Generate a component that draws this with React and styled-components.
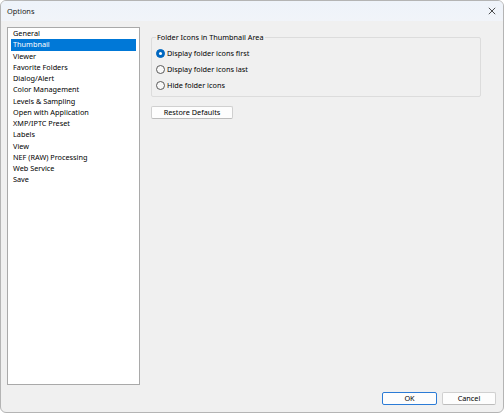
import React from "react";
import styled, { createGlobalStyle } from "styled-components";

const Global = createGlobalStyle`
  html, body { margin: 0; padding: 0; background: #ffffff; }
  body { font-family: "Noto Sans", "Open Sans", sans-serif; }
`;

const Window = styled.div`
  box-sizing: border-box;
  width: 504px;
  height: 413px;
  border: 1px solid #b4b4b4;
  border-radius: 6px;
  overflow: hidden;
  background: #f0f0f0;
  display: flex;
  flex-direction: column;
`;

const TitleBar = styled.div`
  height: 20px;
  flex: none;
  display: flex;
  align-items: center;
  justify-content: space-between;
  padding: 0 6px 0 6px;
  background: linear-gradient(#eef3fa, #f1f4f9);
  font-size: 7.4px;
  color: #1a1a1a;
`;

const CloseIcon = styled.svg`
  width: 8px;
  height: 8px;
  margin-right: 1px;
`;

const Body = styled.div`
  flex: 1;
  display: flex;
  flex-direction: column;
  padding: 6px 7px 7px 6px;
`;

const Main = styled.div`
  display: flex;
  gap: 11px;
`;

const ListBox = styled.div`
  box-sizing: border-box;
  width: 133px;
  height: 358px;
  background: #ffffff;
  border: 1px solid #a9a9a9;
  padding: 0 3px;
  display: flex;
  flex-direction: column;
`;

const ListItem = styled.div`
  height: 11.25px;
  line-height: 11.25px;
  font-size: 7.3px;
  padding-left: 2px;
  white-space: nowrap;
  color: ${(p) => (p.$selected ? "#ffffff" : "#000000")};
  background: ${(p) => (p.$selected ? "#0078d7" : "transparent")};
`;

const Panel = styled.div`
  flex: 1;
  display: flex;
  flex-direction: column;
  align-items: flex-start;
  padding-top: 6px;
  padding-right: 15px;
`;

const Group = styled.fieldset`
  box-sizing: border-box;
  align-self: stretch;
  margin: 0;
  border: 1px solid #dcdcdc;
  border-radius: 2px;
  padding: 3px 4px 6px 4px;
  display: flex;
  flex-direction: column;
  height: 64px;
  min-width: 0;
`;

const Legend = styled.legend`
  font-size: 7.3px;
  padding: 0 1px;
  margin-left: 0;
  color: #000;
  line-height: 9px;
`;

const RadioRow = styled.label`
  display: flex;
  align-items: center;
  height: 16px;
  gap: 2px;
  font-size: 7.3px;
  color: #000;
`;

const RadioCircle = styled.span`
  box-sizing: border-box;
  width: 9px;
  height: 9px;
  border-radius: 50%;
  display: flex;
  align-items: center;
  justify-content: center;
  background: ${(p) => (p.$checked ? "#0067c0" : "#f8f8f8")};
  border: 1px solid ${(p) => (p.$checked ? "#0067c0" : "#5a5a5a")};
  &::after {
    content: "";
    display: ${(p) => (p.$checked ? "block" : "none")};
    width: 3px;
    height: 3px;
    border-radius: 50%;
    background: #ffffff;
  }
`;

const Button = styled.button`
  box-sizing: border-box;
  height: 13px;
  width: ${(p) => p.$w}px;
  padding: 0;
  font-family: inherit;
  font-size: 7.3px;
  color: #000;
  background: #fdfdfd;
  border: 1px solid ${(p) => (p.$default ? "#2b7bd6" : "#d0d0d0")};
  border-bottom-color: ${(p) => (p.$default ? "#2b7bd6" : "#bcbcbc")};
  border-radius: 2px;
  line-height: 11px;
`;

const RestoreWrap = styled.div`
  margin-top: 1px;
`;

const Footer = styled.div`
  margin-top: auto;
  display: flex;
  justify-content: flex-end;
  gap: 5px;
`;

const items = [
  "General",
  "Thumbnail",
  "Viewer",
  "Favorite Folders",
  "Dialog/Alert",
  "Color Management",
  "Levels & Sampling",
  "Open with Application",
  "XMP/IPTC Preset",
  "Labels",
  "View",
  "NEF (RAW) Processing",
  "Web Service",
  "Save",
];

const radios = [
  { label: "Display folder icons first", checked: true },
  { label: "Display folder icons last", checked: false },
  { label: "Hide folder icons", checked: false },
];

export default function App() {
  return (
    <>
      <Global />
      <Window>
        <TitleBar>
          <span>Options</span>
          <CloseIcon viewBox="0 0 10 10">
            <path d="M1 1 L9 9 M9 1 L1 9" stroke="#222" strokeWidth="1" fill="none" />
          </CloseIcon>
        </TitleBar>
        <Body>
          <Main>
            <ListBox>
              {items.map((it) => (
                <ListItem key={it} $selected={it === "Thumbnail"}>
                  {it}
                </ListItem>
              ))}
            </ListBox>
            <Panel>
              <Group>
                <Legend>Folder Icons in Thumbnail Area</Legend>
                {radios.map((r) => (
                  <RadioRow key={r.label}>
                    <RadioCircle $checked={r.checked} />
                    {r.label}
                  </RadioRow>
                ))}
              </Group>
              <RestoreWrap>
                <Button $w={82}>Restore Defaults</Button>
              </RestoreWrap>
            </Panel>
          </Main>
          <Footer>
            <Button $w={55} $default>OK</Button>
            <Button $w={54}>Cancel</Button>
          </Footer>
        </Body>
      </Window>
    </>
  );
}
